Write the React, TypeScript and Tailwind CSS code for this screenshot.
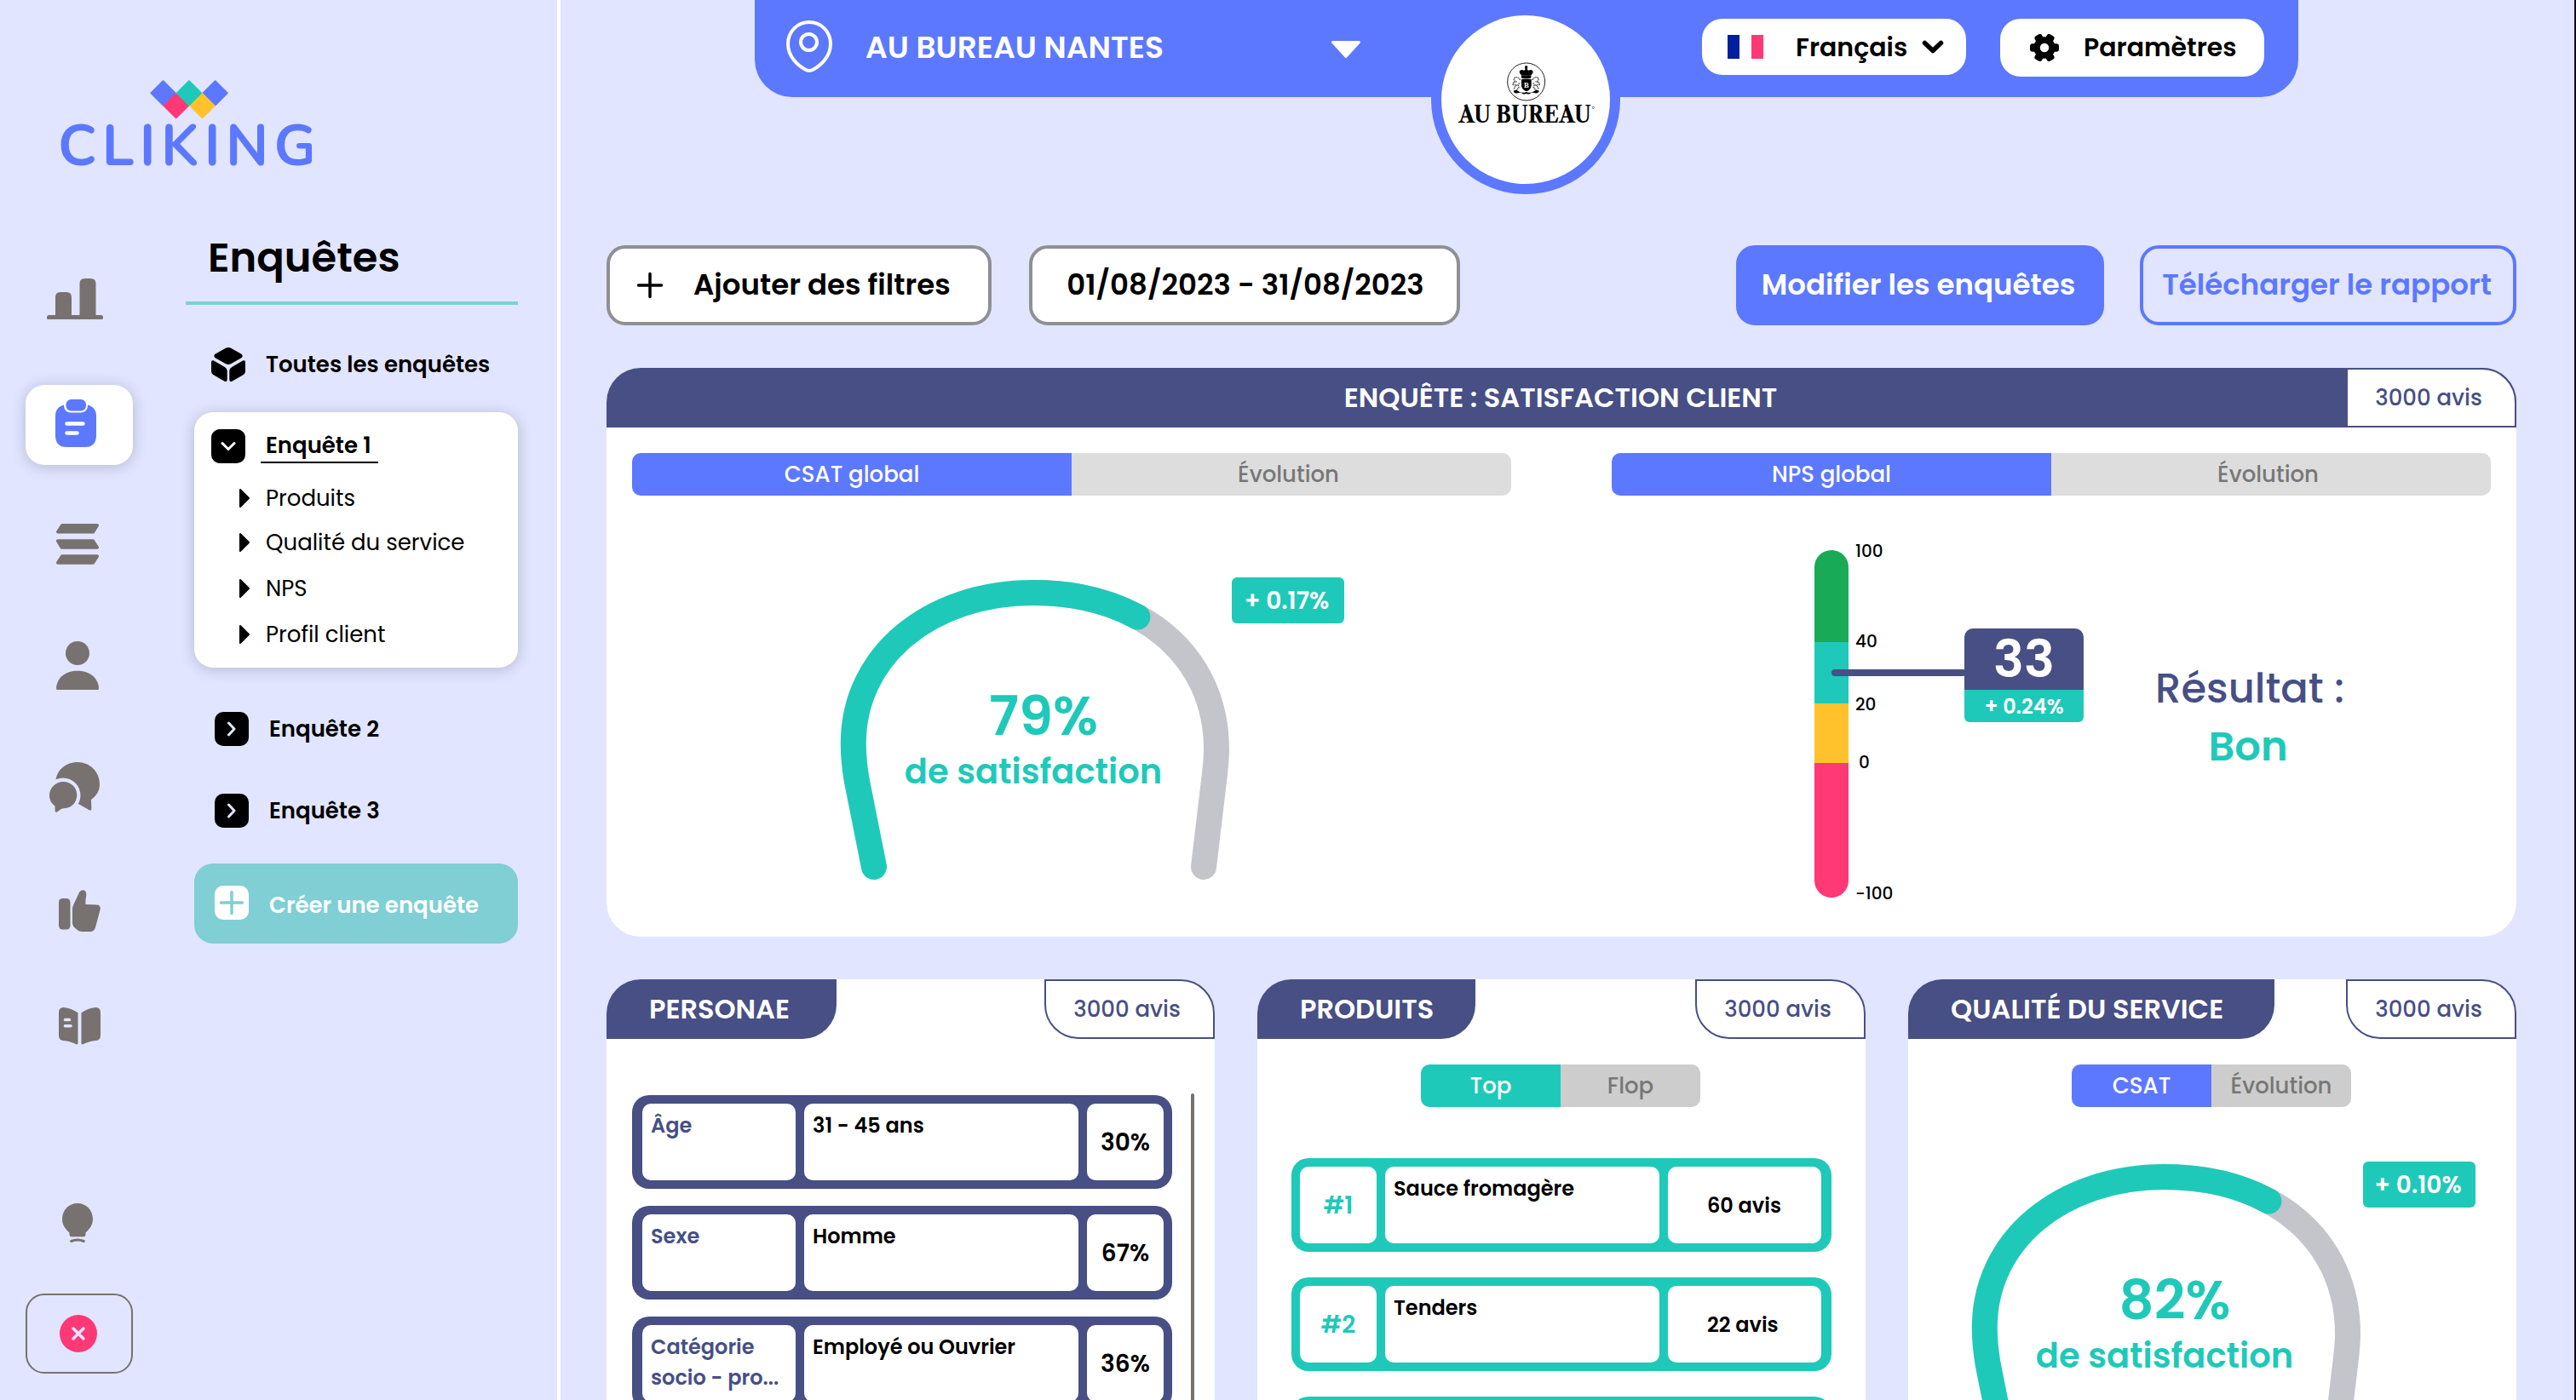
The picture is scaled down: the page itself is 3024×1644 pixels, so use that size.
import React from 'react';

/* ---------- icons ---------- */

function BarsIcon({ className = '' }: { className?: string }) {
  return (
    <svg viewBox="0 0 66 48" className={`h-[48px] w-[66px] fill-[#777270] ${className}`}>
      <path d="M10 44V22q0-6 6-6h7q6 0 6 6v22zM38.500 44V6q0-6 6-6h7q6 0 6 6v38z" />
      <rect x="0" y="43" width="66" height="5.500" rx="2.500" />
    </svg>
  );
}

function ClipboardIcon() {
  return (
    <svg viewBox="0 0 48 56" className="h-[56px] w-[48px]">
      <path d="M12 6h24q12 2 12 14v22q0 14-13 14H13Q0 56 0 42V20Q0 8 12 6z" className="fill-[#5c78ff]" />
      <rect x="10" y="-4" width="28" height="19.500" rx="8" className="fill-white" />
      <rect x="12.500" y="0" width="23.500" height="13.500" rx="6" className="fill-[#5c78ff]" />
      <path d="M13.500 28.500h19M13.500 39.500h12" className="stroke-white stroke-[4.500px]" strokeLinecap="round" />
    </svg>
  );
}

function LayersIcon({ className = '' }: { className?: string }) {
  return (
    <svg viewBox="0 0 50 48" className={`h-[48px] w-[50px] fill-[#777270] stroke-[#777270] stroke-[4px] ${className}`} strokeLinejoin="round">
      <path d="M7 2h41l-4.800 7.600H2zM2 20.200h41l5 7.600H6.500zM7 38.200h41l-4.800 7.600H2z" />
    </svg>
  );
}

function PersonIcon({ className = '' }: { className?: string }) {
  return (
    <svg viewBox="0 0 50 57" className={`h-[57px] w-[50px] fill-[#777270] ${className}`}>
      <circle cx="25" cy="14" r="14" />
      <path d="M1 57q-1 0-1-2C1 42 12 34.800 25 34.800S49 42 50 55q0 2-1 2z" />
    </svg>
  );
}

function ChatIcon({ className = '' }: { className?: string }) {
  return (
    <svg viewBox="0 0 59 59" className={`h-[59px] w-[59px] fill-[#777270] ${className}`}>
      <path d="M7.500 21C9 9 19.500 0 33 0c14.500 0 26 11.500 26 25.500 0 8-3.500 14-10 18.500l.4 10.500q0 3-2.600 1.800L34 49 20 40z" />
      <circle cx="16" cy="39" r="20.500" className="fill-[#e1e5ff]" />
      <path d="M16.300 23C25.500 23 32.300 30 32.300 38.500S26 54 18 54q-3 .3-5 1.500l-4 3q-2.500 1-2.300-1.500L6.500 51.500C2.500 48.500 0 44.500 0 39c0-9 7.500-16 16.300-16z" />
    </svg>
  );
}

function ThumbIcon({ className = '' }: { className?: string }) {
  return (
    <svg viewBox="0 0 49 49" className={`h-[49px] w-[49px] fill-[#777270] ${className}`}>
      <rect x="0" y="10" width="13.500" height="36.500" rx="4.500" />
      <path d="M16 22q0-2 1.500-5L24 3c1.500-3.500 8-4.500 8.300 1.500 0 4-1.300 8-.8 12.500l13 .5c3.500.2 5 2.500 4 6l-5.500 20.500C42 47.500 40 49 37 49h-9.500c-3 0-5-1-7.500-3.500-2.500-2-4-3.500-4-7.500z" />
    </svg>
  );
}

function BookIcon({ className = '' }: { className?: string }) {
  return (
    <svg viewBox="0 0 49 44" className={`h-[44px] w-[49px] fill-[#777270] ${className}`}>
      <path d="M5.500 0C12 .5 17.500 3 22.500 6.200V42q0 2-2 1.300C16 41 11.500 39.300 5.500 39Q0 38.500 0 33V6Q0 0 5.500 0zM43.500 0C37 .5 31.500 3 26.500 6.200V42q0 2 2 1.300c4.500-2.300 9-4 15-4.300Q49 38.500 49 33V6q0-6-5.500-6z" />
      <path d="M7.500 14.500h5M7.500 21.700H14" className="stroke-[#e1e5ff] stroke-[3.600px]" strokeLinecap="round" />
    </svg>
  );
}

function BulbIcon({ className = '' }: { className?: string }) {
  return (
    <svg viewBox="0 0 36 46" className={`h-[46px] w-[36px] fill-[#777270] ${className}`}>
      <path d="M18 0c10 0 18 8 18 18.500 0 7-4 12-8.500 16V37q0 2.300-2.500 2.300H11Q8.500 39.300 8.500 37v-2.500C4 30.500 0 25.500 0 18.500 0 8 8 0 18 0z" />
      <path d="M10.700 44.500q7.300-3 14.600 0" className="fill-none stroke-[#777270] stroke-[3px]" strokeLinecap="round" />
    </svg>
  );
}

function CubeIcon() {
  return (
    <svg viewBox="0 0 40 40" className="size-[40px] fill-black">
      <path d="M17 .8q3-1.600 6 0L35 7.600q3.400 2.400 0 4.800l-12 6.900q-3 1.600-6 0L5 12.400q-3.400-2.400 0-4.800z" />
      <path d="M0 17.500q0-3.400 3-1.900l12.800 7.400q2.900 1.600 2.900 4.400v10.100q0 3.500-3.100 2.200L3 32.500q-3-1.700-3-5zM40 17.500q0-3.400-3-1.900L24.200 23q-2.900 1.600-2.900 4.400v10.100q0 3.500 3.100 2.200L37 32.500q3-1.700 3-5z" />
    </svg>
  );
}

function GearIcon() {
  return (
    <svg viewBox="-17 -16 34 32" className="h-[32px] w-[34px]">
      <circle r="9" className="fill-none stroke-black stroke-[7.500px]" />
      {[0, 60, 120, 180, 240, 300].map((a) => (
        <rect key={a} x="9" y="-4.800" width="8" height="9.600" rx="3" transform={`rotate(${a})`} />
      ))}
    </svg>
  );
}

function Logo() {
  return (
    <div className="ml-[71px] mt-[94px] flex h-[110px] w-[320px] flex-col">
      <svg viewBox="176 93.500 92 45" className="ml-[105px] h-[45px] w-[92px] shrink-0 stroke-[2px]" strokeLinejoin="round">
        <path d="M191.500 94.800l14 14-14 14-14-14z" className="fill-[#5c78ff] stroke-[#5c78ff]" />
        <path d="M252.700 94.800l14 14-14 14-14-14z" className="fill-[#5c78ff] stroke-[#5c78ff]" />
        <path d="M206.700 109.700l14 14-14 14-14-14z" className="fill-[#ff3876] stroke-[#ff3876]" />
        <path d="M237.500 109.700l14 14-14 14-14-14z" className="fill-[#ffc22d] stroke-[#ffc22d]" />
        <path d="M222 94.800l14 14-14 14-14-14z" className="fill-[#1fc9b9] stroke-[#1fc9b9]" />
      </svg>
      <span className="-ml-[3px] font-['Nunito',Inter,sans-serif] text-[67px] font-bold leading-[67px] tracking-[6.3px] text-[#5c78ff]">
        CLIKING
      </span>
    </div>
  );
}

function BrandBadge() {
  return (
    <div className="absolute left-[794px] top-[6px] size-[222px] rounded-full border-[12px] border-[#5c78ff] bg-white">
      <svg viewBox="36 24 594 594" className="size-full">
        <circle cx="335" cy="258" r="66" className="fill-none stroke-[#222] stroke-[3px]" />
        {/* crown */}
        <circle cx="335" cy="206" r="5" />
        <path d="M331 208h8v10h-8zM311 222q4-10 16-4l8-5 8 5q12-6 16 4 1 8-8 14H319q-9-6-8-14z" />
        <path d="M317 236h36l-2 10h-32z" />
        {/* shield */}
        <path d="M318 250q17-5 35 0v22q-2 14-17 20-16-6-18-20z" />
        <text x="336" y="279" textAnchor="middle" className="fill-white font-['Liberation_Serif',serif] text-[26px] font-bold">
          B
        </text>
        {/* supporters */}
        <path
          d="M314 252q-8-12-16-10-8 4-6 12l10 4q-14 0-14 10l14 2q-10 6-10 16M311 262q-6 8-2 16l-12 14M356 252q8-12 16-10 8 4 6 12l-10 4q14 0 14 10l-14 2q10 6 10 16M359 262q6 8 2 16l12 14"
          className="fill-none stroke-[#4a4a58] stroke-[4px]"
          strokeDasharray="5 2"
        />
        <path d="M290 290q10-6 18 2 12 8 27 2 15 6 27-2 8-8 18-2-2 10-14 8-10-4-18 2-8 4-13-1-5 5-13 1-8-6-18-2-12 2-14-8z" />
        <text
          x="97"
          y="402"
          textLength="466"
          lengthAdjust="spacingAndGlyphs"
          className="fill-black font-['Libre_Caslon_Text','Playfair_Display','Liberation_Serif',serif] text-[84px] font-bold"
        >
          AU BUREAU
        </text>
        <circle cx="571" cy="349" r="3.500" className="fill-none stroke-black stroke-[1.500px]" />
      </svg>
    </div>
  );
}

/* ---------- shared pieces ---------- */

function Toggle({ left, right, size, tone }: { left: string; right: string; size: string; tone: 'blue' | 'teal' | 'wide' }) {
  return (
    <div className={`grid h-[50px] shrink-0 grid-cols-2 overflow-hidden rounded-[10px] text-[26px] font-medium leading-[50px] ${size}`}>
      <span className={`text-center text-white ${tone === 'teal' ? 'bg-[#1fc9b9]' : 'bg-[#5c78ff]'}`}>{left}</span>
      <span className={`text-center text-[#777777] ${tone === 'wide' ? 'bg-[#dddddd] pr-[7px]' : 'bg-[#cdcdcd]'}`}>{right}</span>
    </div>
  );
}

function Gauge({ value, delta }: { value: string; delta: string }) {
  return (
    <div className="flex items-start">
      <div className="grid h-[354px] w-[458px] shrink-0">
        <svg viewBox="986 680 458 354" className="col-start-1 row-start-1 h-[354px] w-[458px] fill-none stroke-[30px]" strokeLinecap="round">
          <path d="M1213 696C1340 696 1428 770 1428 880C1428 893 1426.500 904 1425.500 913L1413 1018" className="stroke-[#c4c4cb]" />
          <path
            d="M1026 1018L1005.500 915C1003 900 1001.800 888 1001.800 873C1001.800 770 1092 696 1213 696C1260 696 1301.700 706.100 1335.400 724.500"
            className="stroke-[#1fc9b9]"
          />
        </svg>
        <div className="col-start-1 row-start-1 flex flex-col items-center pt-[121px] font-semibold text-[#1fc9b9]">
          <span className="pl-[20px] text-[64px] leading-[80px]">{value}</span>
          <span className="pr-[4px] text-[40px] leading-[50px]">de satisfaction</span>
        </div>
      </div>
      <span className="-mt-[2px] ml-[2px] h-[54px] w-[132px] rounded-[6px] bg-[#1fc9b9] pr-[3px] text-center text-[28px] font-semibold leading-[55px] text-white">
        {delta}
      </span>
    </div>
  );
}

function ReviewCount() {
  return (
    <span className="h-[70px] w-[200px] rounded-bl-[40px] rounded-tr-[40px] border-2 border-[#474f85] bg-white pr-[6px] text-center text-[26px] font-medium leading-[66px] text-[#474f85]">
      3000 avis
    </span>
  );
}

function Card({ title, tab, children }: { title: string; tab: string; children: React.ReactNode }) {
  return (
    <section className="flex h-[600px] w-[714px] flex-col rounded-t-[40px] bg-white">
      <header className="flex h-[70px] shrink-0 justify-between">
        <h2 className={`rounded-br-[40px] rounded-tl-[40px] bg-[#474f85] pl-[50px] text-[32px] font-semibold leading-[70px] text-white ${tab}`}>{title}</h2>
        <ReviewCount />
      </header>
      {children}
    </section>
  );
}

/* ---------- sidebar ---------- */

const subItems = [
  { label: 'Produits', gap: 'mt-[23px]' },
  { label: 'Qualité du service', gap: 'mt-[16px]' },
  { label: 'NPS', gap: 'mt-[18px]' },
  { label: 'Profil client', gap: 'mt-[18px]' },
];

function SurveyRow({ label, gap }: { label: string; gap: string }) {
  return (
    <div className={`ml-[34px] flex h-[40px] items-center ${gap}`}>
      <span className="flex size-[40px] items-center justify-center rounded-[10px] bg-black">
        <svg viewBox="0 0 12 18" className="h-[18px] w-[12px] fill-none stroke-[#e1e5ff] stroke-[3px]" strokeLinecap="round" strokeLinejoin="round">
          <path d="M2.500 2l6.500 7-6.500 7" />
        </svg>
      </span>
      <span className="ml-[24px] text-[26px] font-semibold leading-[40px]">{label}</span>
    </div>
  );
}

function Sidebar() {
  return (
    <aside className="flex h-full w-[658px] shrink-0 flex-col border-r-[4px] border-white">
      <Logo />
      <div className="flex">
        <nav className="ml-[30px] flex w-[188px] flex-col items-start">
          <BarsIcon className="ml-[25px] mt-[123px]" />
          <span className="mt-[77px] flex h-[94px] w-[126px] items-center justify-center rounded-[22px] bg-white pb-[4px] pr-[8px] shadow-[0_2px_18px_rgba(0,0,0,0.2)]">
            <ClipboardIcon />
          </span>
          <LayersIcon className="ml-[36px] mt-[69px]" />
          <PersonIcon className="ml-[36px] mt-[90px]" />
          <ChatIcon className="ml-[28px] mt-[85px]" />
          <ThumbIcon className="ml-[39px] mt-[91px]" />
          <BookIcon className="ml-[39px] mt-[89px]" />
          <BulbIcon className="ml-[43px] mt-[186px]" />
          <span className="mt-[60px] flex h-[94px] w-[126px] items-center justify-center rounded-[22px] border-2 border-[#777270] pr-[2px]">
            <svg viewBox="0 0 44 44" className="size-[44px]">
              <circle cx="22" cy="22" r="22" className="fill-[#ff3876]" />
              <path d="M16 16l12 12M28 16L16 28" className="stroke-[#e1e5ff] stroke-[3.500px]" strokeLinecap="round" />
            </svg>
          </span>
        </nav>
        <div className="w-[390px]">
          <h1 className="ml-[26px] mt-[64px] text-[48px] font-semibold leading-[70px]">Enquêtes</h1>
          <div className="mt-[16px] h-[4px] bg-[#7fcfd4]" />
          <div className="ml-[30px] mt-[50px] flex h-[40px] items-center">
            <CubeIcon />
            <span className="ml-[24px] text-[26px] font-semibold leading-[38px]">Toutes les enquêtes</span>
          </div>
          <div className="ml-[10px] mt-[36px] h-[300px] w-[380px] rounded-[22px] bg-white pt-[20px] shadow-[0_2px_18px_rgba(0,0,0,0.2)]">
            <div className="ml-[20px] flex h-[40px] items-center">
              <span className="flex size-[40px] items-center justify-center rounded-[10px] bg-black">
                <svg viewBox="0 0 18 12" className="h-[12px] w-[18px] fill-none stroke-white stroke-[3px]" strokeLinecap="round" strokeLinejoin="round">
                  <path d="M2 2.500l7 7 7-7" />
                </svg>
              </span>
              <span className="ml-[18px] h-[40px] w-[138px] border-b-2 border-black pl-[6px] text-[26px] font-semibold leading-[38px]">Enquête 1</span>
            </div>
            {subItems.map((item) => (
              <div key={item.label} className={`ml-[53px] flex h-[36px] items-center ${item.gap}`}>
                <svg viewBox="0 0 12 22" className="h-[22px] w-[12px] fill-black stroke-black stroke-[2px]" strokeLinejoin="round">
                  <path d="M1 1l10 10L1 21z" />
                </svg>
                <span className="ml-[19px] text-[26px] leading-[36px]">{item.label}</span>
              </div>
            ))}
          </div>
          <SurveyRow label="Enquête 2" gap="mt-[52px]" />
          <SurveyRow label="Enquête 3" gap="mt-[56px]" />
          <button className="ml-[10px] mt-[42px] flex h-[94px] w-[380px] items-center rounded-[22px] bg-[#7fcfd4] pb-[2px] pl-[24px]">
            <svg viewBox="0 0 40 40" className="size-[40px]">
              <rect width="40" height="40" rx="10" className="fill-white" />
              <path d="M20 7.500v25M7.500 20h25" className="stroke-[#7fcfd4] stroke-[3.500px]" strokeLinecap="round" />
            </svg>
            <span className="ml-[24px] mt-[5px] text-[26px] font-semibold leading-[40px] text-white">Créer une enquête</span>
          </button>
        </div>
      </div>
    </aside>
  );
}

/* ---------- main ---------- */

function TopBar() {
  return (
    <div className="relative ml-[228px] flex h-[114px] w-[1812px] items-start rounded-b-[44px] bg-[#5c78ff]">
      <svg viewBox="0 0 54 61" className="ml-[37px] mt-[24px] h-[61px] w-[54px] fill-none stroke-white stroke-[4px]">
        <path d="M27 2C13 2 2 13 2 27.500 2 42 13 53 23 58q4 2 8 0C41 53 52 42 52 27.500 52 13 41 2 27 2z" />
        <circle cx="26.500" cy="25.500" r="9.500" />
      </svg>
      <span className="ml-[39px] mt-[30px] w-[546px] text-[36px] font-semibold leading-[52px] text-white">AU BUREAU NANTES</span>
      <svg viewBox="0 0 36 20" className="mt-[48px] h-[20px] w-[36px] fill-white stroke-white stroke-[3px]" strokeLinejoin="round">
        <path d="M2.500 1.500h31L18 18.500z" />
      </svg>
      <BrandBadge />
      <div className="ml-[400px] mt-[22px] flex h-[66px] w-[310px] items-center rounded-[24px] bg-white pl-[30px]">
        <span className="grid h-[28px] w-[42px] grid-cols-3">
          <i className="bg-[#00209f]" />
          <i className="bg-white" />
          <i className="bg-[#ff3876]" />
        </span>
        <span className="ml-[38px] w-[148px] pt-[1px] text-[30px] font-semibold leading-[66px]">Français</span>
        <svg viewBox="0 0 26 16" className="h-[16px] w-[26px] fill-none stroke-black stroke-[5.500px]" strokeLinecap="round" strokeLinejoin="round">
          <path d="M3.500 3.500l9.500 9 9.500-9" />
        </svg>
      </div>
      <div className="ml-[40px] mt-[22px] flex h-[68px] w-[310px] items-center rounded-[24px] bg-white pl-[35px]">
        <GearIcon />
        <span className="ml-[29px] text-[30px] font-semibold leading-[66px]">Paramètres</span>
      </div>
    </div>
  );
}

function Actions() {
  return (
    <div className="mt-[174px] flex h-[94px] w-[2242px] shrink-0 text-[34px] font-semibold leading-[85px]">
      <button className="flex w-[452px] items-center rounded-[22px] border-4 border-[#8f9094] bg-white pl-[31px]">
        <svg viewBox="0 0 32 32" className="size-[32px] stroke-black stroke-[3.500px]" strokeLinecap="round">
          <path d="M16 2.500v27M2.500 16h27" />
        </svg>
        <span className="-mt-[1px] ml-[35px]">Ajouter des filtres</span>
      </button>
      <button className="ml-[44px] w-[506px] rounded-[22px] border-4 border-[#8f9094] bg-white pb-[1px] pl-[2px] text-center">01/08/2023 - 31/08/2023</button>
      <button className="ml-auto w-[432px] rounded-[22px] border-4 border-[#5c78ff] bg-[#5c78ff] pb-[1px] pr-[4px] text-center text-white">
        Modifier les enquêtes
      </button>
      <button className="ml-[42px] w-[442px] rounded-[22px] border-4 border-[#5c78ff] pb-[1px] pr-[3px] text-center text-[#5c78ff]">Télécharger le rapport</button>
    </div>
  );
}

function NpsScale() {
  return (
    <div className="ml-[238px] flex items-start">
      <div className="relative mt-[64px] h-[408px] w-[40px]">
        <div className="flex h-full flex-col overflow-hidden rounded-full">
          <i className="h-[108px] bg-[#18aa55]" />
          <i className="h-[72px] bg-[#1fc9b9]" />
          <i className="h-[70px] bg-[#ffc22d]" />
          <i className="h-[158px] bg-[#ff3876]" />
        </div>
        <span className="absolute left-[20px] top-[140px] h-[8px] w-[158px] rounded-[4px] bg-[#474f85]" />
      </div>
      <div className="ml-[8px] mt-[55px] flex w-[128px] flex-col text-[20px] font-medium leading-[20px]">
        <span>100</span>
        <span className="mt-[86px]">40</span>
        <span className="mt-[54px]">20</span>
        <span className="ml-[4px] mt-[48px]">0</span>
        <span className="mt-[134px]">-100</span>
      </div>
      <div className="mt-[156px] flex w-[140px] flex-col text-center font-semibold text-white">
        <span className="h-[72px] rounded-t-[10px] bg-[#474f85] text-[60px] leading-[73px]">33</span>
        <span className="h-[38px] rounded-b-[6px] bg-[#1fc9b9] text-[24px] leading-[39px]">+ 0.24%</span>
      </div>
      <div className="mt-[193px] flex w-[388px] flex-col text-center text-[48px] leading-[68px]">
        <span className="pl-[2px] font-medium text-[#474f85]">Résultat :</span>
        <span className="pr-[2px] font-semibold text-[#1fc9b9]">Bon</span>
      </div>
    </div>
  );
}

function SatisfactionPanel() {
  return (
    <section className="mt-[50px] h-[668px] w-[2242px] shrink-0 rounded-[40px] bg-white">
      <header className="flex h-[70px] justify-end rounded-t-[40px] bg-[#474f85]">
        <h2 className="flex-1 pl-[200px] pr-[2px] text-center text-[32px] font-semibold leading-[70px] text-white">ENQUÊTE : SATISFACTION CLIENT</h2>
        <span className="w-[200px] rounded-tr-[40px] border-2 border-[#474f85] bg-white pr-[6px] text-center text-[26px] font-medium leading-[66px] text-[#474f85]">
          3000 avis
        </span>
      </header>
      <div className="flex gap-[118px] px-[30px] pt-[30px]">
        <div className="w-[1032px]">
          <Toggle left="CSAT global" right="Évolution" size="w-[1032px]" tone="wide" />
          <div className="ml-[244px] mt-[98px]">
            <Gauge value="79%" delta="+ 0.17%" />
          </div>
        </div>
        <div className="w-[1032px]">
          <Toggle left="NPS global" right="Évolution" size="w-[1032px]" tone="wide" />
          <NpsScale />
        </div>
      </div>
    </section>
  );
}

const personae = [
  { label: 'Âge', value: '31 - 45 ans', share: '30%' },
  { label: 'Sexe', value: 'Homme', share: '67%' },
  { label: 'Catégorie socio - pro...', value: 'Employé ou Ouvrier', share: '36%' },
];

const products = [
  { rank: '#1', name: 'Sauce fromagère', count: '60 avis' },
  { rank: '#2', name: 'Tenders', count: '22 avis' },
  { rank: '', name: '', count: '' },
];

function Cards() {
  return (
    <div className="mt-[50px] flex shrink-0 gap-[50px]">
      <Card title="PERSONAE" tab="w-[270px]">
        <div className="ml-[30px] mt-[64px] flex h-[460px]">
          <div className="mt-[2px] flex w-[634px] flex-col gap-[20px]">
            {personae.map((p) => (
              <div key={p.label} className="flex h-[110px] shrink-0 gap-[10px] rounded-[20px] bg-[#474f85] py-[10px] pl-[12px] pr-[10px] text-[24px] font-semibold leading-[36px]">
                <span className="w-[180px] rounded-[10px] bg-white pl-[10px] pt-[8px] text-[#474f85]">{p.label}</span>
                <span className="w-[322px] rounded-[10px] bg-white pl-[10px] pt-[8px]">{p.value}</span>
                <span className="w-[90px] rounded-[10px] bg-white text-center text-[28px] leading-[92px]">{p.share}</span>
              </div>
            ))}
          </div>
          <i className="ml-[22px] w-[4px] rounded-full bg-[#777270]" />
        </div>
      </Card>
      <Card title="PRODUITS" tab="w-[256px]">
        <div className="ml-[192px] mt-[30px]">
          <Toggle left="Top" right="Flop" size="w-[328px]" tone="teal" />
        </div>
        <div className="ml-[40px] mt-[60px] flex w-[634px] flex-col gap-[30px]">
          {products.map((p) => (
            <div key={p.rank} className="flex h-[110px] shrink-0 gap-[10px] rounded-[20px] bg-[#1fc9b9] py-[10px] pl-[10px] pr-[12px] text-[24px] font-semibold">
              <span className="w-[90px] rounded-[10px] bg-white text-center text-[28px] leading-[92px] text-[#1fc9b9]">{p.rank}</span>
              <span className="w-[322px] rounded-[10px] bg-white pl-[10px] pt-[8px] leading-[36px]">{p.name}</span>
              <span className="w-[180px] rounded-[10px] bg-white pl-[46px] leading-[91px]">{p.count}</span>
            </div>
          ))}
        </div>
      </Card>
      <Card title="QUALITÉ DU SERVICE" tab="w-[430px]">
        <div className="ml-[192px] mt-[30px]">
          <Toggle left="CSAT" right="Évolution" size="w-[328px]" tone="blue" />
        </div>
        <div className="ml-[74px] mt-[66px]">
          <Gauge value="82%" delta="+ 0.10%" />
        </div>
      </Card>
    </div>
  );
}

export default function App() {
  return (
    <div className="flex h-[1644px] w-[3024px] overflow-hidden border-r-2 border-[#0c0c1c] bg-[#e1e5ff] font-['Poppins',Inter,sans-serif] text-black">
      <Sidebar />
      <main className="ml-[54px] flex w-[2242px] shrink-0 flex-col">
        <div className="-ml-[54px]">
          <TopBar />
        </div>
        <Actions />
        <SatisfactionPanel />
        <Cards />
      </main>
    </div>
  );
}
